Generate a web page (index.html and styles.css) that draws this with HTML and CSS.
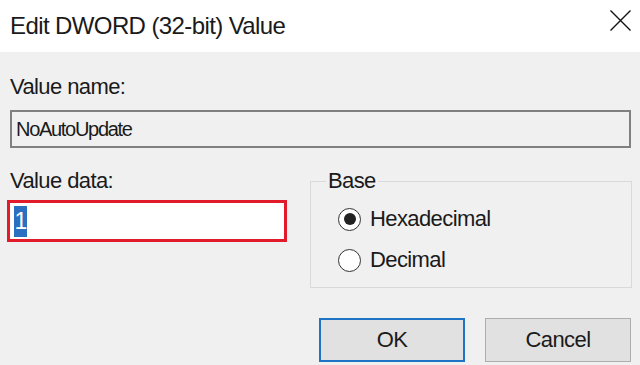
FILE: index.html
```html
<!DOCTYPE html>
<html lang="en">
    <head>
        <meta charset="UTF-8">
        <title>Edit DWORD (32-bit) Value</title>
        <link rel="stylesheet" href="styles.css">
    </head>
    <body>
        <!-- Barra de título -->
        <div class="titlebar">
            <span class="title">Edit DWORD (32-bit) Value</span>
            <svg class="btn-fechar" width="21" height="21" viewBox="0 0 21 21">
                <path d="M0.5 0.5 L20.5 20.5 M20.5 0.5 L0.5 20.5" stroke="#111" stroke-width="1.4" fill="none"/>
            </svg>
        </div>

        <div class="dialog">
            <div class="label label-name">Value name:</div>
            <div class="name-box">NoAutoUpdate</div>

            <div class="row">
                <div class="col-data">
                    <div class="label">Value data:</div>
                    <div class="data-box"><span class="selecao">1</span></div>
                </div>

                <fieldset class="base">
                    <legend>Base</legend>
                    <div class="radio">
                        <span class="circulo marcado"></span>
                        <span>Hexadecimal</span>
                    </div>
                    <div class="radio">
                        <span class="circulo"></span>
                        <span>Decimal</span>
                    </div>
                </fieldset>
            </div>

            <div class="botoes">
                <button class="btn btn-ok">OK</button>
                <button class="btn">Cancel</button>
            </div>
        </div>
    </body>
</html>
```

FILE: styles.css
```css
/* Base da janela */
body {
    margin: 0;
    width: 640px;
    height: 365px;
    overflow: hidden;
    background: #f0f0f0;
    font-family: "Liberation Sans", Arial, sans-serif;
    font-size: 22px;
    letter-spacing: -0.6px;
    color: #1a1a1a;
}

/* Barra de título */
.titlebar {
    height: 52px;
    background: #fff;
    display: flex;
    justify-content: space-between;
    padding: 0 9px 0 10px;
}

.title {
    font-size: 24px;
    line-height: 52px;
}

.btn-fechar {
    margin-top: 10px;
}

/* Conteúdo */
.dialog {
    padding: 0 9px 0 10px;
}

.label {
    line-height: 26px;
}

.label-name {
    margin-top: 22px;
}

.name-box {
    margin-top: 10px;
    height: 34px;
    border: 2px solid #808080;
    padding-left: 4px;
    font-size: 20px;
    letter-spacing: -1.3px;
    line-height: 34px;
}

.row {
    display: flex;
    justify-content: space-between;
    align-items: flex-start;
    margin-top: 20px;
}

.col-data {
    width: 277px;
}

/* Campo com destaque vermelho */
.data-box {
    margin: 6px 0 0 -3px;
    width: 270px;
    height: 36px;
    border: 3px solid #e21b2a;
    background: #fff;
    padding-left: 4px;
    display: flex;
    align-items: center;
}

.selecao {
    background: #2a6fc0;
    color: #fff;
    font-size: 23px;
    line-height: 31px;
    padding: 0 0.5px;
}

/* Grupo Base */
.base {
    margin: 0 -1px 0 0;
    width: 320px;
    border: 1px solid #d9d9d9;
    padding: 0 0 15px 27px;
    box-sizing: border-box;
    width: 322px;
}

.base legend {
    margin-left: -12px;
    padding: 0 2px;
    line-height: 26px;
}

.radio {
    display: flex;
    align-items: center;
    gap: 9px;
    height: 24px;
    margin-top: 17px;
}

.radio:first-of-type {
    margin-top: 13px;
}

.circulo {
    width: 21px;
    height: 21px;
    border: 1.5px solid #333;
    border-radius: 50%;
    background: #fff;
    display: flex;
    align-items: center;
    justify-content: center;
}

.marcado::after {
    content: "";
    width: 12px;
    height: 12px;
    border-radius: 50%;
    background: #222;
}

/* Botões */
.botoes {
    display: flex;
    justify-content: flex-end;
    gap: 20px;
    margin-top: 30px;
}

.btn {
    width: 146px;
    height: 44px;
    background: #e1e1e1;
    border: 1px solid #adadad;
    font-family: inherit;
    font-size: 22px;
    letter-spacing: -0.6px;
    color: #1a1a1a;
    padding: 0;
}

.btn-ok {
    border: 2px solid #1e73c4;
}
```
